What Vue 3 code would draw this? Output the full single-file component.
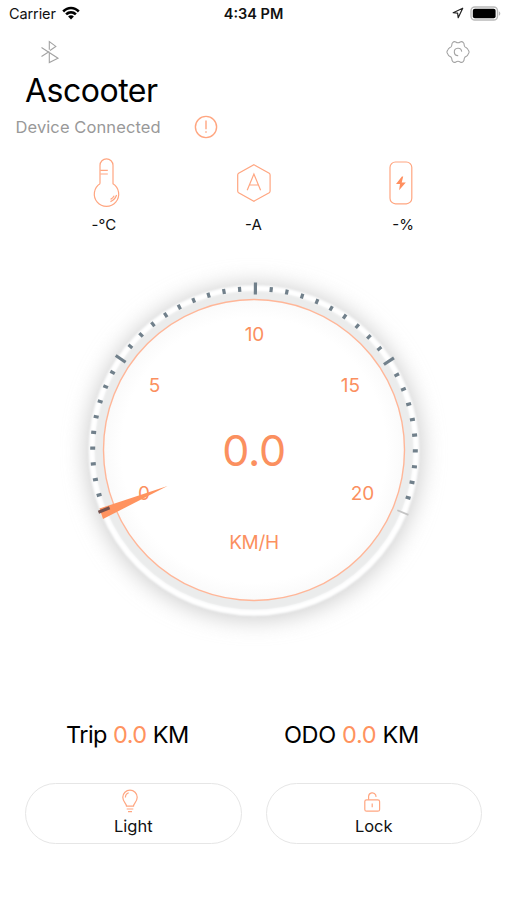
<template>
  <main class="screen">
    <header class="status-bar">
      <div class="carrier">
        <span>Carrier</span>
        <svg class="wifi" viewBox="0 0 18 14">
          <path d="M0.3 4.6C5.2-0.7 12.8-0.7 17.7 4.6L15.9 6.4C12 2.3 6 2.3 2.1 6.4Z" />
          <path d="M3.2 7.5C6.4 4.2 11.6 4.2 14.8 7.5L13 9.3C10.8 7.1 7.2 7.1 5 9.3Z" />
          <path d="M6.1 10.4C7.7 8.9 10.3 8.9 11.9 10.4L9 13.4Z" />
        </svg>
      </div>
      <span class="clock">4:34 PM</span>
      <div class="status-icons">
        <svg class="location" viewBox="0 0 12 12">
          <path d="M10.7 1.2L1.2 5.7L5.6 6.2L6.2 10.7Z" />
        </svg>
        <svg class="battery" viewBox="0 0 31 15">
          <rect x="1" y="1" width="26.5" height="13" rx="3.8" fill="#fff" stroke="#b9b9b9" stroke-width="1.4" />
          <rect x="2.8" y="2.8" width="22.8" height="9.4" rx="2" fill="#000" />
          <path d="M28.9 5.2C30.8 6 30.8 9 28.9 9.8Z" fill="#b9b9b9" />
        </svg>
      </div>
    </header>

    <nav class="toolbar">
      <svg class="bluetooth" viewBox="0 0 20 24">
        <path d="M1.5 7.5L18 18.2L9.3 22.5V12.5M1.5 16.5L9.3 11.5M9.3 9.8V1.6L15.8 6.4L10 10.5" />
      </svg>
      <svg class="settings" viewBox="0 0 24 24">
        <path d="M6.6 2.6Q8.2 0.9 9.8 2Q12 3.6 14.2 2Q15.8 0.9 17.4 2.6Q18.2 3.4 18.2 5.2Q18.4 7.3 20.6 7.9Q21.5 8.2 21.9 9.4L22.9 11.2Q23.2 12 22.9 12.8L21.9 14.6Q21.5 15.8 20.6 16.1Q18.4 16.7 18.2 18.8Q18.2 20.6 17.4 21.4Q15.8 23.1 14.2 22Q12 20.4 9.8 22Q8.2 23.1 6.6 21.4Q5.8 20.6 5.8 18.8Q5.6 16.7 3.4 16.1Q2.5 15.8 2.1 14.6L1.1 12.8Q0.8 12 1.1 11.2L2.1 9.4Q2.5 8.2 3.4 7.9Q5.6 7.3 5.8 5.2Q5.8 3.4 6.6 2.6Z" />
        <path d="M12.2 15.6A3.7 3.7 0 1 1 15.7 11.6" />
      </svg>
    </nav>

    <h1>Ascooter</h1>
    <div class="device">
      <span>Device Connected</span>
      <svg viewBox="0 0 24 24">
        <circle cx="12" cy="12" r="10.6" />
        <path d="M12 5.5V14.2M12 16.2V17.8" />
      </svg>
    </div>

    <section class="readings">
      <div class="reading">
        <svg viewBox="0 0 50 50">
          <path d="M21 25.8V7.3A6.5 6.5 0 0 1 34 7.3V25.8A12.2 12.2 0 1 1 21 25.8" />
          <path d="M21.3 12.3H28.8M21.3 16H28.8M37.6 37A11 11 0 0 1 31.4 43.6M35.2 37.8A9 9 0 0 1 31.6 41.4" />
        </svg>
        <span>-°C</span>
      </div>
      <div class="reading">
        <svg viewBox="0 0 50 50">
          <path d="M24.9 6.7L40.2 15.2Q41.1 15.8 41.1 17V33Q41.1 34.2 40.2 34.8L24.9 43.2L9.6 34.8Q8.7 34.2 8.7 33V17Q8.7 15.8 9.6 15.2Z" />
          <path d="M18.2 32.2L24.9 16L31.6 32.2M20.4 27H29.4" />
        </svg>
        <span>-A</span>
      </div>
      <div class="reading">
        <svg viewBox="0 0 50 50">
          <rect x="11" y="4" width="21.8" height="41.8" rx="5.5" />
          <path class="bolt" d="M22.9 18.5L17 26H21L20.1 32.3L26.8 24.4H22.7L24.2 18.5Z" />
        </svg>
        <span>-%</span>
      </div>
    </section>

    <svg class="gauge" viewBox="-200 -200 400 400">
      <defs>
        <filter id="halo" x="-20%" y="-20%" width="140%" height="140%">
          <feGaussianBlur stdDeviation="11" />
        </filter>
        <filter id="soft" x="-10%" y="-10%" width="120%" height="120%">
          <feGaussianBlur stdDeviation="0.8" />
        </filter>
        <radialGradient id="face" gradientUnits="userSpaceOnUse" cx="0" cy="0" r="150.5">
          <stop offset="0.88" stop-color="#fff" />
          <stop offset="1" stop-color="#fafafa" />
        </radialGradient>
      </defs>
      <circle cy="2" r="168" fill="#cecece" filter="url(#halo)" />
      <circle cy="0.5" r="165" fill="#f3f4f5" filter="url(#soft)" />
      <circle r="155.2" fill="none" stroke="#ebecec" stroke-width="9" />
      <circle cy="0.5" r="162.3" fill="none" stroke="#fff" stroke-width="5" filter="url(#soft)" />
      <circle r="150.5" fill="url(#face)" stroke="#ffb698" stroke-width="1.4" />
      <text
        v-for="mark in labels"
        :key="mark.value"
        class="mark"
        :x="mark.x"
        :y="mark.y"
      >{{ mark.value }}</text>
      <path class="needle" d="M-86.5 36L-154.5 58.5L-151 69Z" />
      <line
        v-for="tick in ticks"
        :key="tick.index"
        :class="['tick', { last: tick.index === 40 }]"
        :y1="-tick.outer"
        :y2="-tick.inner"
        :transform="`rotate(${tick.angle})`"
      />
      <text class="speed" x="0" y="16">{{ speed }}</text>
      <text class="unit" x="0" y="99">KM/H</text>
    </svg>

    <section class="totals">
      <p class="trip">Trip <b>0.0</b> KM</p>
      <p class="odo">ODO <b>0.0</b> KM</p>
    </section>

    <section class="actions">
      <button type="button">
        <svg viewBox="0 0 24 24">
          <path d="M8.5 17.2C8.5 14.2 4.8 13 4.8 8.3A7.2 7.2 0 0 1 19.2 8.3C19.2 13 15.5 14.2 15.5 17.2ZM8.7 20H15.3M10 22.7H14M7.4 8.6C7.4 6 8.7 4.5 10.7 3.8" />
        </svg>
        <span>Light</span>
      </button>
      <button type="button">
        <svg viewBox="0 0 24 24">
          <rect x="5.8" y="10.8" width="14.8" height="11.4" rx="1.8" />
          <path d="M9.6 10.8V7.3A3.7 3.7 0 0 1 16.7 6.1L17.1 7.8M13.2 14.4V18.2" />
        </svg>
        <span>Lock</span>
      </button>
    </section>
  </main>
</template>

<script setup>
import { ref } from 'vue'

const speed = ref('0.0')

const labels = [
  { value: 0, x: -110, y: 49.5 },
  { value: 5, x: -99.5, y: -58 },
  { value: 10, x: 0.5, y: -109 },
  { value: 15, x: 96.5, y: -58 },
  { value: 20, x: 108.5, y: 50 }
]

const ticks = Array.from({ length: 41 }, (_, index) => {
  const major = index % 10 === 0
  return {
    index,
    angle: -111.8 + index * 5.615,
    outer: major ? 167.5 : 163.8,
    inner: major ? 155.5 : 158.8
  }
})
</script>

<style>
body {
  margin: 0;
  background: #fff;
}
</style>

<style scoped>
.screen {
  width: 507px;
  height: 900px;
  overflow: hidden;
  display: flex;
  flex-direction: column;
  background: #fff;
  color: #111;
  font-family: Inter, "Liberation Sans", sans-serif;
}

svg {
  display: block;
  fill: none;
  flex: none;
}

.status-bar {
  height: 26px;
  padding: 0 6px 0 9px;
  display: grid;
  grid-template-columns: 1fr auto 1fr;
  align-items: center;
  font-size: 14.5px;
}

.carrier,
.status-icons {
  display: flex;
  align-items: center;
}

.carrier {
  gap: 6px;
  letter-spacing: -0.1px;
}

.wifi {
  width: 18px;
  height: 14px;
  fill: #000;
}

.clock {
  margin-left: -3px;
  font-weight: 600;
}

.status-icons {
  justify-content: flex-end;
  gap: 6px;
}

.location {
  width: 12px;
  height: 12px;
  stroke: #222;
  stroke-width: 1.2;
  stroke-linejoin: round;
}

.battery {
  width: 31px;
  height: 15px;
}

.toolbar {
  height: 24px;
  margin-top: 14px;
  padding: 0 37.5px 0 39.5px;
  display: flex;
  justify-content: space-between;
  stroke: #a3a3a3;
  stroke-width: 1.1;
}

.bluetooth {
  width: 20px;
  height: 24px;
}

.settings {
  width: 24px;
  height: 24px;
}

h1 {
  margin: 7px 0 0 25px;
  font-size: 32px;
  font-weight: 400;
  line-height: 40px;
  letter-spacing: -0.5px;
  color: #000;
}

.device {
  height: 24px;
  margin: 4px 0 0 15.5px;
  display: flex;
  align-items: center;
  gap: 33px;
  font-size: 16.5px;
  letter-spacing: 0.1px;
  color: #999;
}

.device svg {
  width: 24px;
  height: 24px;
  stroke: #ffa681;
  stroke-width: 1.4;
}

.readings {
  margin-top: 19px;
  padding: 0 29px;
  display: grid;
  grid-template-columns: repeat(3, 1fr);
}

.reading {
  display: flex;
  flex-direction: column;
  align-items: center;
  gap: 8px;
  font-size: 15px;
  line-height: 18px;
}

.reading svg {
  width: 50px;
  height: 50px;
  margin-left: 1px;
  stroke: #ffa681;
  stroke-width: 1.2;
}

.reading .bolt {
  fill: #ff8f5f;
  stroke: none;
}

.gauge {
  width: 400px;
  height: 400px;
  margin: 16px 0 0 54px;
}

.gauge text {
  fill: #fb905f;
  text-anchor: middle;
}

.mark,
.unit {
  font-size: 19px;
}

.unit {
  letter-spacing: -0.3px;
}

.speed {
  font-size: 43px;
  letter-spacing: -0.3px;
}

.needle {
  fill: #ff935f;
}

.tick {
  stroke: #71808b;
  stroke-width: 3.2;
}

.tick:first-of-type {
  stroke: #75504c;
}

.tick.last {
  stroke: #c4c4c4;
  stroke-width: 1.8;
}

.totals {
  height: 36px;
  margin-top: 67px;
  display: flex;
  color: #000;
  font-size: 23.5px;
  line-height: 36px;
}

.totals p {
  margin: 0;
  white-space: nowrap;
}

.trip {
  width: 218px;
  padding-left: 66px;
  letter-spacing: -0.55px;
}

.odo {
  letter-spacing: -0.35px;
}

.totals b {
  color: #ff935f;
  font-weight: 400;
}

.actions {
  margin-top: 30px;
  padding: 0 25px;
  display: grid;
  grid-template-columns: 1fr 1fr;
  gap: 24px;
}

button {
  height: 61px;
  padding: 5px 0 0;
  border: 1.5px solid #e6e6e6;
  border-radius: 31px;
  background: #fff;
  display: flex;
  flex-direction: column;
  align-items: center;
  gap: 2px;
  font: inherit;
  font-size: 16.5px;
  line-height: 22px;
  color: #111;
}

button svg {
  width: 24px;
  height: 24px;
  margin-right: 6px;
  stroke: #ffa681;
  stroke-width: 1.2;
}
</style>
